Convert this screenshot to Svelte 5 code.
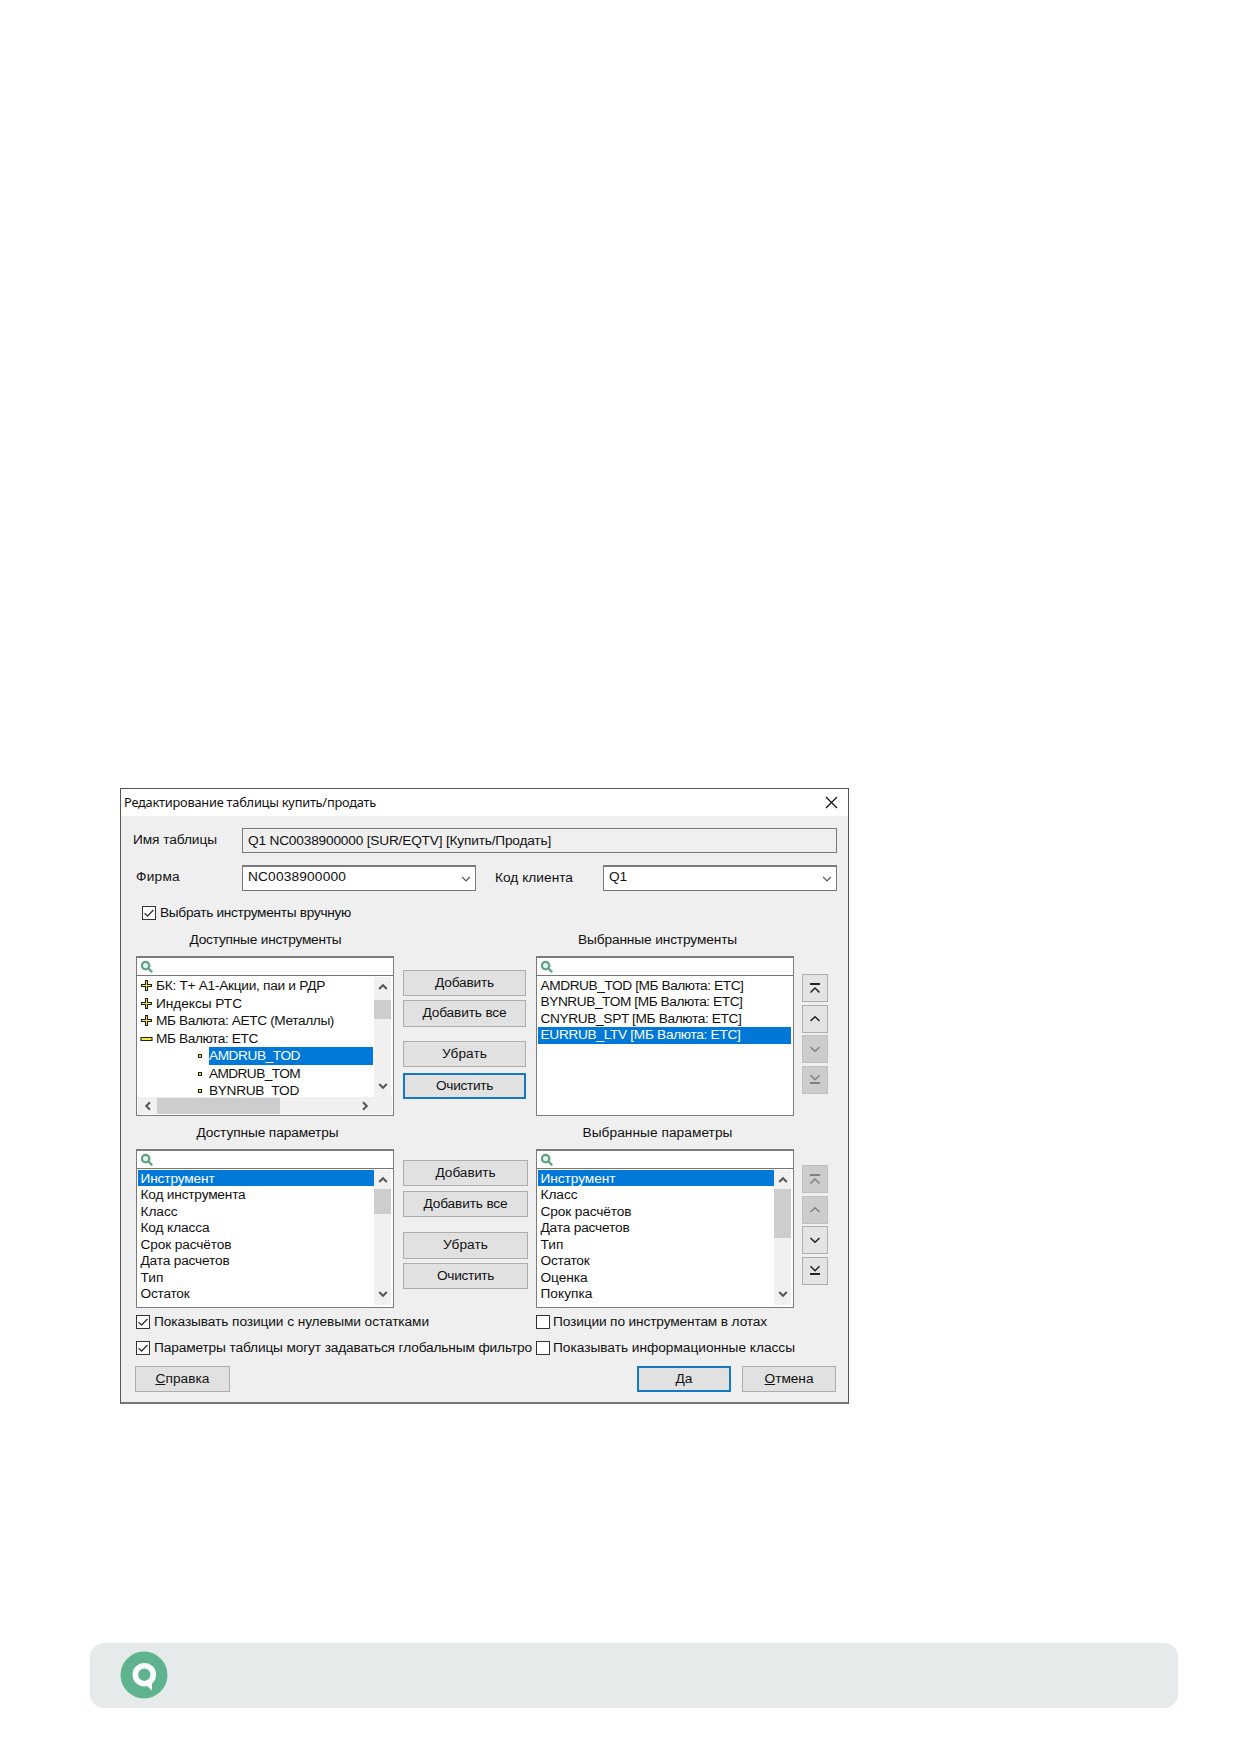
<script>
  const tree = [
    { icon: 'plus', label: 'БК: Т+ А1-Акции, паи и РДР', w: 168 },
    { icon: 'plus', label: 'Индексы РТС', w: 85 },
    { icon: 'plus', label: 'МБ Валюта: АЕТС (Металлы)', w: 177 },
    { icon: 'minus', label: 'МБ Валюта: ЕТС', w: 101 },
    { icon: 'leaf', label: 'AMDRUB_TOD', w: 90, selected: true },
    { icon: 'leaf', label: 'AMDRUB_TOM', w: 90 },
    { icon: 'leaf', label: 'BYNRUB_TOD', w: 89 }
  ];
  const chosen = [
    ['AMDRUB_TOD [МБ Валюта: ЕТС]', 202],
    ['BYNRUB_TOM [МБ Валюта: ЕТС]', 201],
    ['CNYRUB_SPT [МБ Валюта: ЕТС]', 200],
    ['EURRUB_LTV [МБ Валюта: ЕТС]', 199]
  ];
  const available = [
    ['Инструмент', 73], ['Код инструмента', 104], ['Класс', 36], ['Код класса', 68],
    ['Срок расчётов', 90], ['Дата расчетов', 88], ['Тип', 22], ['Остаток', 48]
  ];
  const params = [
    ['Инструмент', 74], ['Класс', 36], ['Срок расчётов', 90], ['Дата расчетов', 88],
    ['Тип', 22], ['Остаток', 48], ['Оценка', 46], ['Покупка', 51]
  ];

  // Spreads the letters so the label takes the given width.
  function fit(node, width) {
    const natural = node.getBoundingClientRect().width;
    node.style.letterSpacing = `${(width + 1 - natural) / node.textContent.length}px`;
  }
</script>

{#snippet txt(label, w)}<span class="t" use:fit={w}>{label}</span>{/snippet}

{#snippet chevron(dir)}
  <svg class="chev {dir}" width="10" height="8" viewBox="0 0 10 8"><path d="M1.2 6 5 2.2 8.8 6" /></svg>
{/snippet}

{#snippet search()}
  <div class="search">
    <svg width="14" height="14" viewBox="0 0 14 14"><circle cx="5.6" cy="5.6" r="3.7" /><path d="m8.4 8.4 3.8 3.8" /></svg>
  </div>
{/snippet}

{#snippet check(on)}
  <span class="box">
    {#if on}<svg width="12" height="12" viewBox="0 0 12 12"><path d="M1.6 6.2 4.6 9 10.4 3" /></svg>{/if}
  </span>
{/snippet}

{#snippet mover(kind, off)}
  <span class="mover" class:off>
    <svg width="12" height="14" viewBox="0 0 12 14">
      {#if kind === 'top'}<path class="bar" d="M1 3h10" /><path d="M1.5 11.5 6 7l4.5 4.5" />
      {:else if kind === 'up'}<path d="M1.5 9 6 4.8 10.5 9" />
      {:else if kind === 'down'}<path d="M1.5 5 6 9.2 10.5 5" />
      {:else}<path d="M1.5 2.2 6 6.7l4.5-4.5" /><path class="bar" d="M1 10h10" />{/if}
    </svg>
  </span>
{/snippet}

{#snippet list(rows, sel)}
  <div class="rows">
    {#each rows as [label, w], i}
      <div class="row" class:selected={i === sel}>{@render txt(label, w)}</div>
    {/each}
  </div>
{/snippet}

<div class="page">
  <div class="dialog">
    <header>
      {@render txt('Редактирование таблицы купить/продать', 251)}
      <svg width="13" height="13" viewBox="0 0 13 13"><path d="m1 1 11 11M12 1 1 12" /></svg>
    </header>

    <div class="line name">
      <label for="table">{@render txt('Имя таблицы', 83)}</label>
      <div id="table" class="field">{@render txt('Q1 NC0038900000 [SUR/EQTV] [Купить/Продать]', 302)}</div>
    </div>

    <div class="line client">
      <span class="firm">{@render txt('Фирма', 43)}</span>
      <div class="combo">{@render txt('NC0038900000', 97)}{@render chevron('down')}</div>
      <span class="code">{@render txt('Код клиента', 77)}</span>
      <div class="combo right">{@render txt('Q1', 17)}{@render chevron('down')}</div>
    </div>

    <div class="line manual">{@render check(true)}{@render txt('Выбрать инструменты вручную', 190)}</div>

    <div class="heads">
      <h2>{@render txt('Доступные инструменты', 151)}</h2>
      <h2>{@render txt('Выбранные инструменты', 158)}</h2>
    </div>

    <div class="pair first">
      <div class="panel">
        {@render search()}
        <div class="body">
          <div class="tree">
            {#each tree as n}
              <div class="node {n.icon}">
                <svg width="13" height="13" viewBox="0 0 13 13">
                  {#if n.icon === 'plus'}<path d="M5.5 1.5h2v4h4v2h-4v4h-2v-4h-4v-2h4z" />
                  {:else if n.icon === 'minus'}<path d="M1 5.5h11v3H1z" />
                  {:else}<path d="M5.5 5.5h3v3h-3z" />{/if}
                </svg>
                <div class="label" class:selected={n.selected}>{@render txt(n.label, n.w)}</div>
              </div>
            {/each}
          </div>
          <div class="vscroll tall">{@render chevron('up')}<i></i>{@render chevron('down')}</div>
        </div>
        <div class="hscroll">{@render chevron('left')}<i></i>{@render chevron('right')}</div>
      </div>
      <div class="actions">
        <button>{@render txt('Добавить', 58)}</button>
        <button class="b2">{@render txt('Добавить все', 83)}</button>
        <button class="b3">{@render txt('Убрать', 44)}</button>
        <button class="b4 focus">{@render txt('Очистить', 56)}</button>
      </div>
      <div class="panel">
        {@render search()}
        <div class="body">{@render list(chosen, 3)}</div>
      </div>
      <div class="movers">
        {@render mover('top', false)}{@render mover('up', false)}{@render mover('down', true)}{@render mover('bottom', true)}
      </div>
    </div>

    <div class="heads second">
      <h2>{@render txt('Доступные параметры', 141)}</h2>
      <h2>{@render txt('Выбранные параметры', 149)}</h2>
    </div>

    <div class="pair last">
      <div class="panel">
        {@render search()}
        <div class="body">
          {@render list(available, 0)}
          <div class="vscroll">{@render chevron('up')}<i></i>{@render chevron('down')}</div>
        </div>
      </div>
      <div class="actions">
        <button>{@render txt('Добавить', 59)}</button>
        <button class="b2">{@render txt('Добавить все', 83)}</button>
        <button class="b3">{@render txt('Убрать', 44)}</button>
        <button class="b4">{@render txt('Очистить', 56)}</button>
      </div>
      <div class="panel">
        {@render search()}
        <div class="body">
          {@render list(params, 0)}
          <div class="vscroll long">{@render chevron('up')}<i></i>{@render chevron('down')}</div>
        </div>
      </div>
      <div class="movers">
        {@render mover('top', true)}{@render mover('up', true)}{@render mover('down', false)}{@render mover('bottom', false)}
      </div>
    </div>

    <div class="options">
      <div>{@render check(true)}{@render txt('Показывать позиции с нулевыми остатками', 274)}</div>
      <div>{@render check(false)}{@render txt('Позиции по инструментам в лотах', 213)}</div>
      <div>{@render check(true)}{@render txt('Параметры таблицы могут задаваться глобальным фильтро', 377)}</div>
      <div>{@render check(false)}{@render txt('Показывать информационные классы', 241)}</div>
    </div>

    <footer>
      <button><span class="t" use:fit={53}><u>С</u>правка</span></button>
      <button class="focus ok"><span class="t" use:fit={16}><u>Д</u>а</span></button>
      <button class="cancel"><span class="t" use:fit={48}><u>О</u>тмена</span></button>
    </footer>
  </div>

  <div class="strip">
    <svg width="48" height="48" viewBox="0 0 48 48">
      <circle class="disc" cx="24" cy="24" r="23.5" />
      <circle class="ring" cx="24.3" cy="23.7" r="9" />
      <path class="tail" d="M24 32 32 39.5V28z" />
    </svg>
  </div>
</div>

<style>
  :global(body) { margin: 0; background: #fff; }
  .page {
    box-sizing: border-box; width: 1240px; height: 1754px; padding: 788px 0 0 120px;
    font: 13.7px/16px "Liberation Sans", Arial, sans-serif; color: #111; overflow: hidden;
  }
  .page * { box-sizing: border-box; }
  .t { display: inline-block; white-space: pre; }
  svg { display: block; flex: none; fill: none; }
  .dialog {
    display: flex; flex-direction: column; width: 729px; height: 616px;
    background: #efefef; border: 1px solid #555; border-bottom-width: 2px; border-bottom-color: #777;
  }
  header {
    display: flex; justify-content: space-between; align-items: center; flex: none;
    height: 27px; padding: 0 10px 1px 3px; background: #fff;
    font: 12.8px/18px "Noto Sans", "Open Sans", sans-serif;
  }
  header svg { stroke: #111; stroke-width: 1.2; }
  .line { display: flex; flex: none; }
  .name { margin-top: 12px; height: 25px; padding-left: 12px; }
  .name label { width: 109px; padding-top: 4px; }
  .field { width: 595px; border: 1px solid #7a7a7a; padding: 4px 0 0 5px; }
  .client { margin-top: 12px; height: 26px; padding-left: 15px; }
  .firm { width: 106px; padding-top: 4px; }
  .combo {
    display: flex; justify-content: space-between; width: 234px; height: 26px; background: #fff;
    border: 1px solid #7a7a7a; border-top-width: 2px; padding: 2px 4px 0 5px;
  }
  .combo .chev { margin-top: 6px; stroke-width: 1.2; }
  .code { width: 127px; padding: 5px 0 0 19px; }
  .manual { margin-top: 14px; height: 16px; padding-left: 21px; gap: 4px; align-items: center; }
  .box { display: block; flex: none; width: 14px; height: 14px; background: #fff; border: 1px solid #333; }
  .box svg { stroke: #333; stroke-width: 1.3; }

  .heads { display: flex; flex: none; margin-top: 11px; height: 24px; padding-left: 15px; gap: 142px; }
  .heads.second { margin-top: 9px; }
  h2 { width: 258px; margin: 0; font: inherit; text-align: center; }
  .heads h2:first-child { padding-left: 1px; }
  .second h2:first-child { padding-left: 5px; }
  .heads h2:last-child { padding-right: 15px; }

  .pair { display: flex; flex: none; height: 160px; padding-left: 15px; }
  .last { height: 159px; }
  .panel {
    display: flex; flex-direction: column; width: 258px; background: #fff;
    border: 1px solid #7c7c7c; border-top-width: 2px;
  }
  .search { flex: none; height: 18px; padding: 2px 0 0 3px; border-bottom: 1px solid #777; }
  .search svg { stroke: #61a384; stroke-width: 2.3; fill: #dff5e9; }
  .body { display: flex; flex: 1; min-height: 0; }
  .tree { flex: 1; overflow: hidden; padding-top: 1px; }
  .node { display: flex; align-items: center; height: 17.5px; padding-left: 3px; gap: 3px; }
  .node svg { stroke: #222; stroke-width: 1.1; fill: #f1ee3c; }
  .node .label { height: 17.5px; line-height: 17.5px; }
  .leaf { padding-left: 56px; }
  .leaf .label { width: 164px; }
  .selected { background: #0078d7; color: #fff; }
  .rows { flex: 1; padding: 1px 2px 0 1px; }
  .first .rows { padding-top: 2px; }
  .row { height: 16.43px; padding-left: 2.5px; }
  .last .row { line-height: 17.5px; }
  .vscroll {
    display: flex; flex-direction: column; align-items: center; flex: none; width: 17px;
    margin: 1px 2px 2px 0; padding: 6px 0 7px; background: #f0f0f0;
  }
  .last .rows { padding-right: 0; }
  .vscroll i { width: 17px; height: 25px; margin: 5px 0 auto; background: #cdcdcd; }
  .vscroll.tall { margin-bottom: 0; }
  .tall i { height: 19px; margin-top: 9px; }
  .long i { height: 49px; }
  .hscroll {
    display: flex; align-items: center; flex: none; height: 17px; margin: 0 1px 1px; padding: 0 22px 0 5px;
    background: #f0f0f0;
  }
  .hscroll i { width: 123px; height: 16px; margin: 0 auto 0 4px; background: #cdcdcd; }
  .chev { stroke: #555; stroke-width: 2; }
  .chev.down { transform: rotate(180deg); }
  .chev.left { transform: rotate(-90deg); }
  .chev.right { transform: rotate(90deg); }

  button {
    display: flex; align-items: center; justify-content: center; flex: none; height: 26px; margin: 0; padding: 0 0 1px;
    font: inherit; color: inherit; background: #e1e1e1; border: 1px solid #adadad; border-radius: 0;
  }
  .focus { border: 2px solid #1478c6; }
  .actions { display: flex; flex-direction: column; width: 142px; padding: 14px 10px 0 9px; }
  .first .b2 { margin-top: 4px; height: 27px; }
  .first .b3 { margin-top: 14px; }
  .first .b4 { margin-top: 6px; }
  .last .actions { padding: 11px 8px 0 9px; }
  .last .b2 { margin-top: 5px; }
  .last .b3 { margin-top: 15px; height: 27px; }
  .last .b4 { margin-top: 4px; }
  .movers { display: flex; flex-direction: column; gap: 2.6px; padding: 18px 0 0 8px; }
  .last .movers { padding-top: 16px; }
  .mover {
    display: flex; align-items: center; justify-content: center; width: 26px; height: 28px;
    background: #e4e4e4; border: 1px solid #adadad;
  }
  .mover svg { stroke: #222; stroke-width: 1.5; }
  .mover .bar { stroke-width: 2; }
  .off { background: #ccc; border-color: #c0c0c0; }
  .mover.off svg { stroke: #808080; }

  .options {
    display: grid; grid-template-columns: 400px 290px; grid-auto-rows: 26px; flex: none;
    margin-top: 1px; padding-left: 15px;
  }
  .options div { display: flex; align-items: center; gap: 3px; }
  .options div:nth-child(odd) { gap: 4px; }
  footer { display: flex; flex: none; margin-top: 5px; padding-left: 14px; }
  footer button { width: 95px; }
  footer .ok { width: 94px; margin: 0 11px 0 407px; }
  footer .cancel { width: 94px; }

  .strip {
    display: flex; align-items: center; width: 1088px; height: 65px; margin: 239px 0 0 -30px; padding: 0 0 1px 30px;
    background: #e6eaea; border-radius: 14px;
  }
  .disc { fill: #5fb38f; }
  .ring { stroke: #fff; stroke-width: 5.6; }
  .tail { fill: #fff; }
</style>
